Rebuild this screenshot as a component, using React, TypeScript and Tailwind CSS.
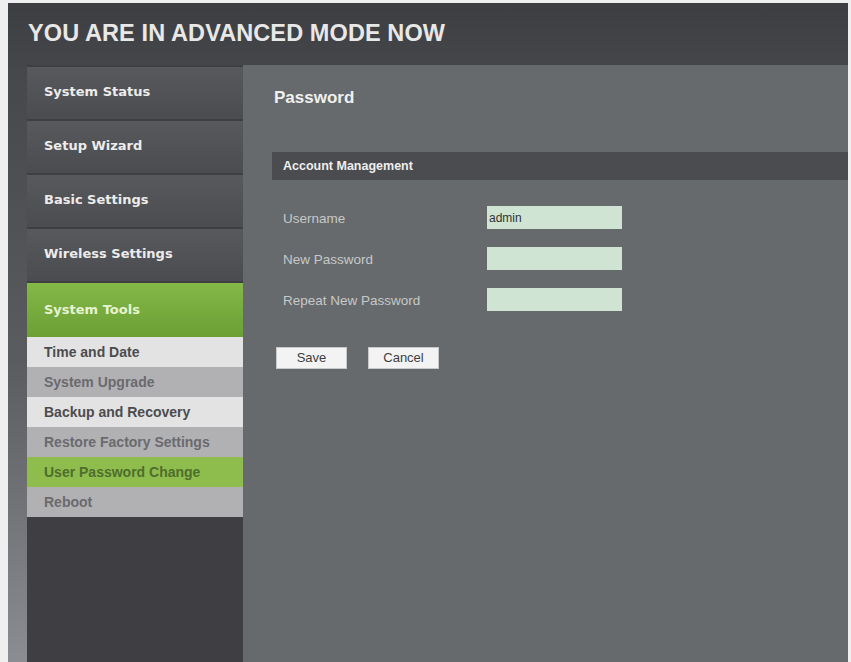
import React from "react";

const navMain = ["System Status", "Setup Wizard", "Basic Settings", "Wireless Settings"];

const sub: { label: string; kind: "light" | "gray" | "green" }[] = [
  { label: "Time and Date", kind: "light" },
  { label: "System Upgrade", kind: "gray" },
  { label: "Backup and Recovery", kind: "light" },
  { label: "Restore Factory Settings", kind: "gray" },
  { label: "User Password Change", kind: "green" },
  { label: "Reboot", kind: "gray" },
];

export default function App() {
  return (
    <div className="w-[851px] h-[662px] overflow-hidden bg-[#efefef] pt-[3px] pl-[8px] pr-[3px] flex flex-col" style={{ fontFamily: '"Liberation Sans", Arial, sans-serif' }}>
      <div className="h-[62px] shrink-0 bg-gradient-to-b from-[#3c3e42] to-[#44464a] flex items-center pl-[20px]">
        <span className="text-[23.5px] font-bold text-[#e8e8e8] tracking-[0.1px]">YOU ARE IN ADVANCED MODE NOW</span>
      </div>
      <div className="flex flex-1 min-h-0">
        <div className="w-[19px] shrink-0 bg-gradient-to-b from-[#46474b] via-[#5b5c60] to-[#8c8d92]" />
        <div className="w-[216px] shrink-0 bg-[#3f3e43] flex flex-col pt-[2px] gap-[2px]">
          {navMain.map((n) => (
            <div key={n} className="h-[52px] bg-gradient-to-b from-[#58595c] to-[#4b4c4f] flex items-center pl-[17px] pb-[2px]">
              <span className="text-[13px] font-bold text-[#ececec]" style={{ fontFamily: '"DejaVu Sans", Verdana, sans-serif' }}>{n}</span>
            </div>
          ))}
          <div>
            <div className="h-[54px] bg-gradient-to-b from-[#84b847] to-[#6c9f35] flex items-center pl-[17px]">
              <span className="text-[13px] font-bold text-[#e6f3d2]" style={{ fontFamily: '"DejaVu Sans", Verdana, sans-serif' }}>System Tools</span>
            </div>
            {sub.map((s) => (
              <div
                key={s.label}
                className={
                  "h-[30px] flex items-center pl-[17px] text-[14px] font-bold " +
                  (s.kind === "light"
                    ? "bg-[#e3e3e4] text-[#4c4c4e]"
                    : s.kind === "gray"
                    ? "bg-[#b1b1b4] text-[#6a6a6e]"
                    : "bg-[#8fbd4d] text-[#4d6e2c]")
                }
              >
                {s.label}
              </div>
            ))}
          </div>
        </div>
        <div className="flex-1 bg-[#666a6c] flex flex-col">
          <div className="mt-[23px] ml-[31px] text-[17px] font-bold text-[#f0f0f0] leading-[20px]">Password</div>
          <div className="mt-[44px] ml-[29px] h-[28px] bg-[#4b4c50] flex items-center pl-[11px]">
            <span className="text-[12.5px] font-bold text-[#eeeeee]">Account Management</span>
          </div>
          <div className="mt-[26px] ml-[40px] flex flex-col gap-[18px]">
            {[
              ["Username", "admin"],
              ["New Password", ""],
              ["Repeat New Password", ""],
            ].map(([l, v]) => (
              <div key={l} className="flex items-center h-[23px]">
                <span className="w-[204px] text-[13.5px] text-[#c6c8c8] pt-[3px]">{l}</span>
                <div className="w-[135px] h-[23px] bg-[#cfe4d3] flex items-center pl-[2px] text-[12px] text-[#333]">{v}</div>
              </div>
            ))}
          </div>
          <div className="mt-[36px] ml-[33px] flex gap-[21px]">
            <button className="w-[71px] h-[22px] bg-[#f3f3f3] border border-[#c8c8c8] text-[13px] text-[#3e3e3e]">Save</button>
            <button className="w-[71px] h-[22px] bg-[#f3f3f3] border border-[#c8c8c8] text-[13px] text-[#3e3e3e]">Cancel</button>
          </div>
        </div>
      </div>
    </div>
  );
}
